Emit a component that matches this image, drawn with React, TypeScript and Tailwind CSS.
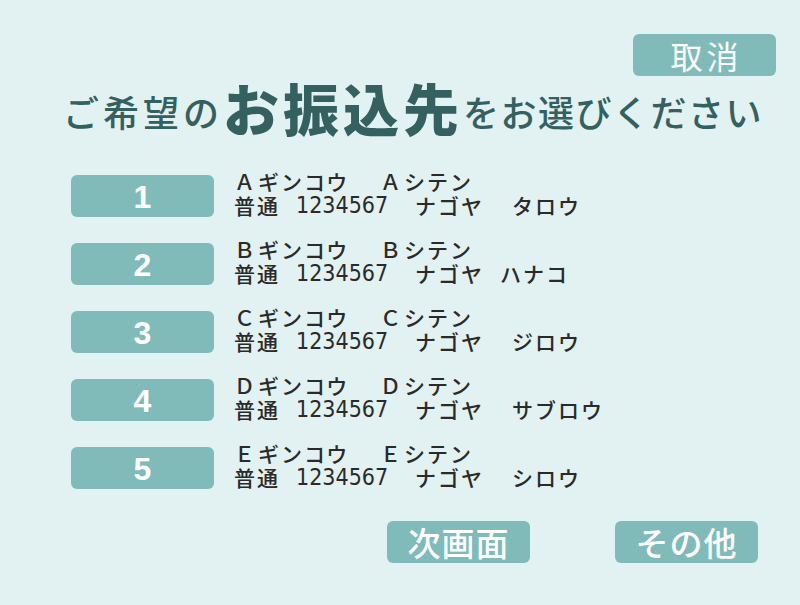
import React from 'react';

const rows = [
  { n: '1', b: 'Ａ', name: 'タロウ', gap: 'w-[97px]' },
  { n: '2', b: 'Ｂ', name: 'ハナコ', gap: 'w-[85px]' },
  { n: '3', b: 'Ｃ', name: 'ジロウ', gap: 'w-[97px]' },
  { n: '4', b: 'Ｄ', name: 'サブロウ', gap: 'w-[97px]' },
  { n: '5', b: 'Ｅ', name: 'シロウ', gap: 'w-[97px]' },
];

const font = { fontFamily: '"Noto Sans CJK JP", "Noto Sans", sans-serif' };

export default function App() {
  return (
    <div className="w-[800px] h-[605px] bg-[#e2f1f2] flex flex-col overflow-hidden" style={font}>
      {/* cancel */}
      <div className="flex justify-end pt-[34px] pr-[24px]">
        <button className="w-[143px] h-[42px] rounded-[6px] bg-[#80bbba] text-white text-[32px] leading-none tracking-[4px] pl-[4px]">
          取消
        </button>
      </div>

      {/* title */}
      <div className="flex items-end justify-center h-[60px] mt-[-1px] pl-[26px] text-[#346060] whitespace-nowrap">
        <span className="text-[36px] leading-none tracking-[4px] font-medium pb-[6px]">ご希望の</span>
        <span className="text-[56px] leading-none font-black tracking-[4px]">お振込先</span>
        <span className="text-[36px] leading-none tracking-[1.5px] font-medium pb-[6px]">をお選びください</span>
      </div>

      {/* list */}
      <div className="flex flex-col gap-[26px] mt-[40px] pl-[71px]">
        {rows.map((r) => (
          <div key={r.n} className="flex items-center h-[42px]">
            <button
              className="w-[143px] h-[42px] rounded-[6px] bg-[#80bbba] text-white text-[32px] font-bold leading-none pt-[2px]"
              style={{ fontFamily: '"Liberation Sans", sans-serif' }}
            >
              {r.n}
            </button>
            <div className="ml-[20px] text-[#2a2a2a] text-[21px] font-medium leading-none whitespace-nowrap mt-[-5px] flex flex-col gap-[1px]">
              <div className="flex h-[23px] items-center">
                <span className="w-[24px] leading-none">{r.b}</span>
                <span className="w-[122px] tracking-[2px] leading-none">ギンコウ</span>
                <span className="w-[24px] leading-none">{r.b}</span>
                <span className="tracking-[2px] leading-none">シテン</span>
              </div>
              <div className="flex h-[23px] items-center">
                <span className="w-[62px] tracking-[2px] leading-none">普通</span>
                <span
                  className="w-[119px] text-[23px] leading-none"
                  style={{ fontFamily: '"DejaVu Sans Condensed", "DejaVu Sans", sans-serif' }}
                >
                  1234567
                </span>
                <span className={`${r.gap} tracking-[2px] leading-none`}>ナゴヤ</span>
                <span className="tracking-[2px] leading-none">{r.name}</span>
              </div>
            </div>
          </div>
        ))}
      </div>

      {/* bottom */}
      <div className="flex mt-[32px] pl-[387px] gap-[85px]">
        <button className="w-[143px] h-[42px] rounded-[6px] bg-[#80bbba] text-white text-[33px] leading-none font-medium tracking-[1px]">
          次画面
        </button>
        <button className="w-[143px] h-[42px] rounded-[6px] bg-[#80bbba] text-white text-[33px] leading-none font-medium tracking-[1px]">
          その他
        </button>
      </div>
    </div>
  );
}
